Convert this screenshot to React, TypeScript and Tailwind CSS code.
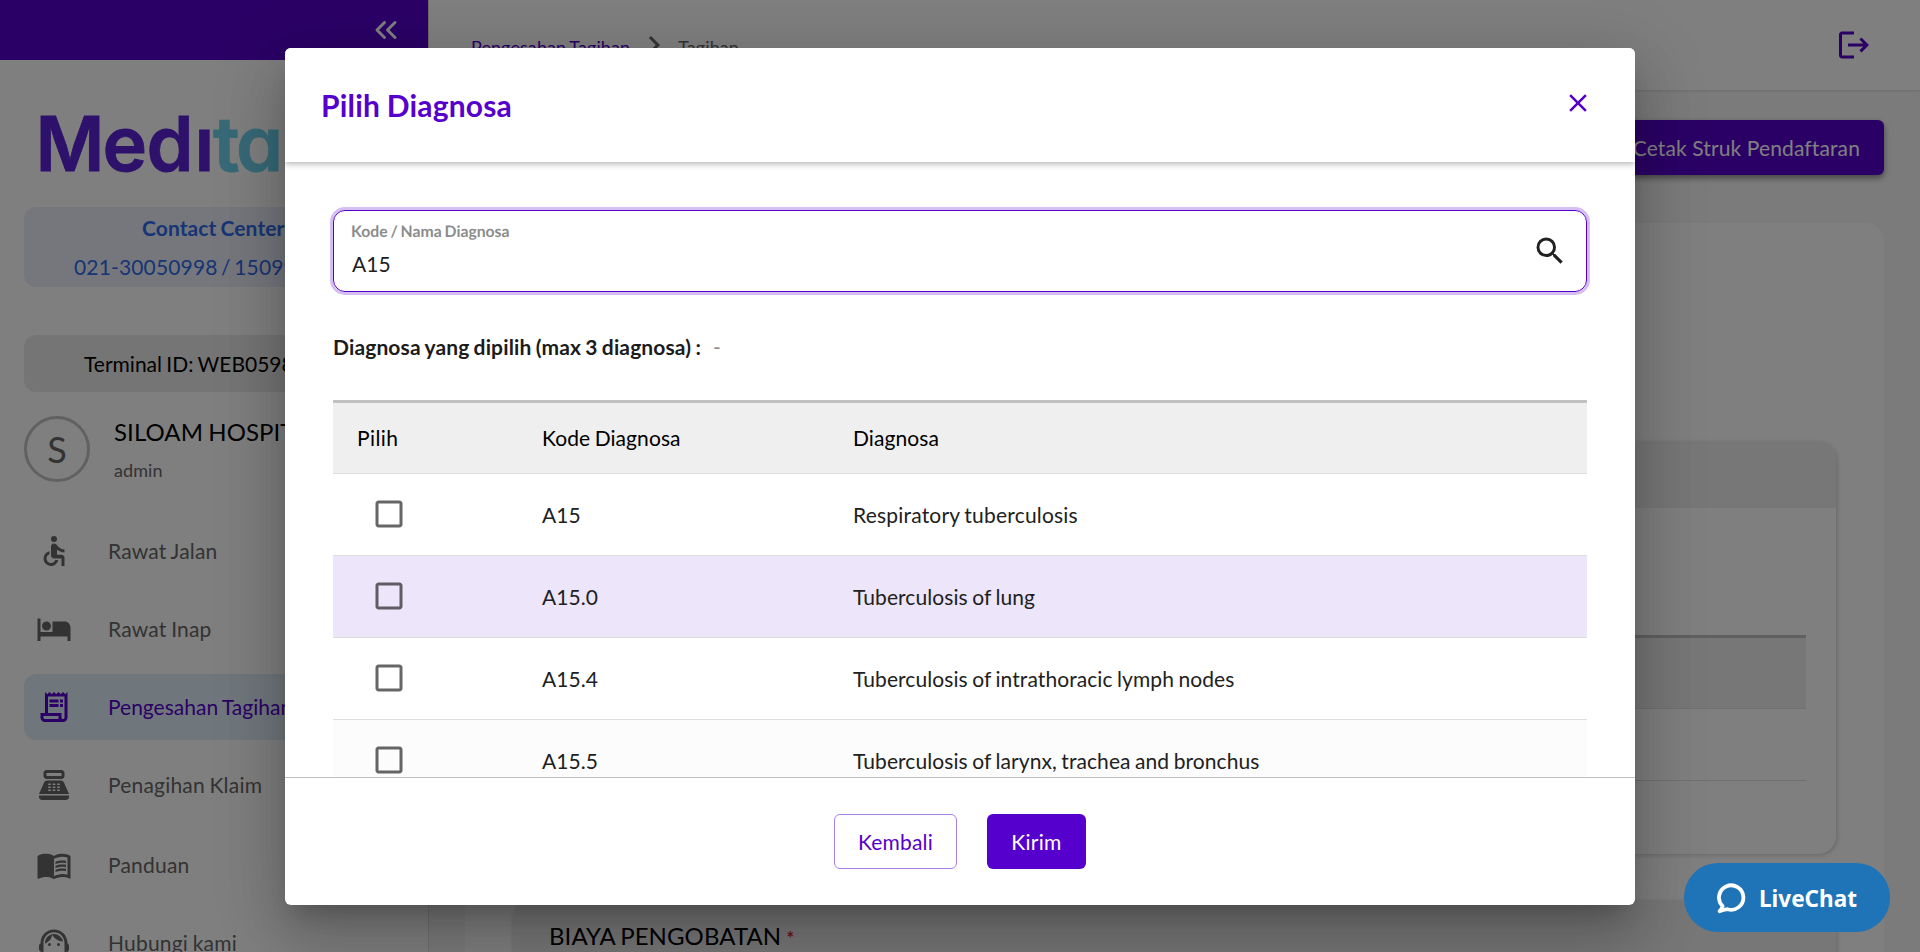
import React from "react";
import type { IconType } from "react-icons";
import {
  MdAccessible,
  MdCheckBoxOutlineBlank,
  MdChevronRight,
  MdClose,
  MdHotel,
  MdLogout,
  MdMenuBook,
  MdOutlineReceiptLong,
  MdPointOfSale,
  MdSearch,
  MdSupportAgent,
} from "react-icons/md";
import { ChevronsLeft } from "lucide-react";
import clsx from "clsx";

type NavItem = { label: string; icon: IconType; active?: boolean; spaced?: boolean };

const navItems: NavItem[] = [
  { label: "Rawat Jalan", icon: MdAccessible },
  { label: "Rawat Inap", icon: MdHotel },
  { label: "Pengesahan Tagihan", icon: MdOutlineReceiptLong, active: true },
  { label: "Penagihan Klaim", icon: MdPointOfSale },
  { label: "Panduan", icon: MdMenuBook, spaced: true },
  { label: "Hubungi kami", icon: MdSupportAgent },
];

type Diagnosis = { code: string; name: string; tone: string };

const diagnoses: Diagnosis[] = [
  { code: "A15", name: "Respiratory tuberculosis", tone: "bg-white" },
  { code: "A15.0", name: "Tuberculosis of lung", tone: "bg-[#ede5fa]" },
  { code: "A15.4", name: "Tuberculosis of intrathoracic lymph nodes", tone: "bg-white" },
  { code: "A15.5", name: "Tuberculosis of larynx, trachea and bronchus", tone: "bg-[#fcfcfc]" },
];

function Logo() {
  return (
    <svg className="block h-[147px] w-[428px] shrink-0" viewBox="0 60 428 147">
      <g
        className="font-['Inter',sans-serif] tracking-normal [font-feature-settings:'cv11']"
        fontSize="75.5"
        fontWeight="600"
      >
        <text y="171" x="35.5" fill="#5b22d6" stroke="#5b22d6" strokeWidth="0.8" textLength="69" lengthAdjust="spacingAndGlyphs">
          M
        </text>
        <text y="171" x="102.5 146.5 194.5" fill="#5b22d6" stroke="#5b22d6" strokeWidth="0.8">
          edı
        </text>
        <text y="171" x="213 236" fill="#6fd3ef" stroke="#6fd3ef" strokeWidth="0.8">
          ta
        </text>
      </g>
    </svg>
  );
}

function Sidebar() {
  return (
    <aside className="flex w-[429px] shrink-0 flex-col border-r border-[#e0e0e0] bg-white">
      <div className="flex h-[60px] shrink-0 items-center justify-end bg-[#5600cd] pr-6 text-white">
        <ChevronsLeft size={36} strokeWidth={2} />
      </div>
      <Logo />
      <div className="mx-6 flex h-20 shrink-0 flex-col whitespace-nowrap rounded-xl bg-[#ebeffb] pt-px leading-[39px] text-[#2f6ae8]">
        <span className="pl-[118px] font-bold">Contact Center</span>
        <span className="pl-[50px] tracking-[0.15px] [word-spacing:-2px]">021-30050998 / 1509977</span>
      </div>
      <div className="mx-6 mt-12 flex h-[57px] shrink-0 items-center whitespace-nowrap rounded-xl bg-[#ebebeb] pl-[60px] tracking-normal">
        Terminal ID: WEB059881
      </div>
      <div className="mx-6 mt-6 flex h-[66px] shrink-0 items-center">
        <div className="flex size-[66px] items-center justify-center rounded-full border-[3px] border-[#c2c2c2] text-[36px] text-[#666]">
          S
        </div>
        <div className="ml-6 flex flex-col whitespace-nowrap">
          <span className="text-2xl leading-9">SILOAM HOSPITALS</span>
          <span className="mt-[7px] text-lg leading-[27px] text-[#666]">admin</span>
        </div>
      </div>
      <nav className="mx-6 mt-9 flex flex-col gap-3">
        {navItems.map(({ label, icon: Icon, active, spaced }) => (
          <div
            key={label}
            className={clsx(
              "flex h-[66px] shrink-0 items-center whitespace-nowrap rounded-xl pl-3",
              active ? "bg-[#e1eff9] text-[#5600cd]" : "text-[#666]",
              spaced && "mt-[2px]",
            )}
          >
            <Icon size={36} />
            <span className={clsx("ml-9", active ? "tracking-normal" : "tracking-[0.2px]")}>{label}</span>
          </div>
        ))}
      </nav>
    </aside>
  );
}

function Page() {
  return (
    <main className="flex min-w-0 flex-1 flex-col bg-[#f7f7f7]">
      <header className="flex h-[90px] shrink-0 items-start justify-between bg-white pl-[42px] pr-12 shadow-[0_1px_3px_rgba(0,0,0,0.12)]">
        <div className="flex items-start pt-[27px] text-lg leading-9">
          <span className="pt-[2px] text-[#5600cd]">Pengesahan Tagihan</span>
          <MdChevronRight size={36} className="ml-[6px] text-[#666]" />
          <span className="ml-[6px] pt-[2px] text-[#666]">Tagihan</span>
        </div>
        <MdLogout size={36} className="mt-[27px] text-[#5600cd]" />
      </header>
      <div className="flex justify-end pr-9 pt-[30px]">
        <button className="h-[55px] w-[300px] rounded-md bg-[#5600cd] pr-6 text-right tracking-[0.12px] text-white shadow-[0_3px_6px_rgba(0,0,0,0.45)]">
          Cetak Struk Pendaftaran
        </button>
      </div>
      <section className="ml-9 mr-9 mt-12 flex h-[900px] shrink-0 flex-col rounded-[18px] bg-white px-12 pt-[219px]">
        <div className="h-[412px] shrink-0 overflow-visible rounded-[18px] shadow-[1px_1px_5px_rgba(0,0,0,0.2)]">
          <div className="h-[66px] rounded-t-[18px] bg-[#efefef]" />
          <div className="mx-[30px] mt-[127px] h-[74px] border-b border-t-[3px] border-b-[#dedede] border-t-[#c0c0c0] bg-[#efefef]" />
          <div className="mx-[30px] h-[72px] border-b border-[#dedede]" />
        </div>
        <div className="mt-[47px] h-[200px] shrink-0 rounded-[18px] bg-[#efefef] pl-9 pt-[17px] text-2xl leading-9 shadow-[1px_1px_5px_rgba(0,0,0,0.2)]">
          BIAYA PENGOBATAN <span className="text-lg font-bold text-[#d32f2f]">*</span>
        </div>
      </section>
    </main>
  );
}

function DiagnosisDialog() {
  return (
    <div
      role="dialog"
      className="flex h-[857px] w-[1350px] flex-col overflow-hidden rounded-md bg-white shadow-[0_16px_22px_-10px_rgba(0,0,0,0.2),0_36px_57px_4px_rgba(0,0,0,0.14),0_13px_69px_12px_rgba(0,0,0,0.12)]"
    >
      <div className="z-10 flex h-[114px] shrink-0 items-center justify-between bg-white pl-9 pr-[42px] shadow-[0_2px_6px_rgba(0,0,0,0.3)]">
        <h2 className="text-[30px] font-bold tracking-[0.2px] text-[#5600cd]">Pilih Diagnosa</h2>
        <MdClose size={30} className="-mt-1 text-[#5600cd]" />
      </div>
      <div className="flex min-h-0 flex-1 flex-col overflow-hidden px-12 pt-12">
        <div className="flex h-[82px] shrink-0 items-center justify-between rounded-xl border border-[#5600cd] px-[18px] shadow-[0_0_0_3px_rgba(86,0,205,0.25)]">
          <div className="-mt-[3px] flex flex-col">
            <span className="-ml-px text-[15.75px] font-bold leading-6 tracking-normal text-[#8c8c8c] [text-rendering:geometricPrecision] [word-spacing:-1px]">
              Kode / Nama Diagnosa
            </span>
            <span className="mt-[5px] leading-[30px] text-[#212121]">A15</span>
          </div>
          <MdSearch size={36} className="text-[#212121]" />
        </div>
        <div className="mt-10 flex h-[30px] shrink-0 items-center whitespace-pre text-[#1c1c1c]">
          <span className="font-bold tracking-[0.13px]">Diagnosa yang dipilih (max 3 diagnosa) :</span>
          <span className="ml-3 text-[#8c8c8c]">-</span>
        </div>
        <div className="mt-[38px] grid h-[74px] shrink-0 grid-cols-[185px_311px_1fr] items-center border-b border-t-[3px] border-b-[#dedede] border-t-[#c0c0c0] bg-[#efefef] pl-6 text-black">
          <span className="tracking-[0.4px]">Pilih</span>
          <span>Kode Diagnosa</span>
          <span>Diagnosa</span>
        </div>
        {diagnoses.map((d, i) => (
          <div
            key={d.code}
            className={clsx(
              "grid h-[82px] shrink-0 grid-cols-[185px_311px_1fr] items-center border-b border-[#dedede] pl-6 text-[#212121]",
              d.tone,
            )}
          >
            <MdCheckBoxOutlineBlank size={36} className="-mt-[2px] ml-[14px] text-black/60" />
            <span>{d.code}</span>
            <span className={clsx(i === 0 && "tracking-[0.2px]")}>{d.name}</span>
          </div>
        ))}
      </div>
      <div className="flex h-[128px] shrink-0 items-center justify-center gap-[30px] border-t border-[#c0c0c0]">
        <button className="h-[55px] w-[123px] rounded-md border border-[#aa80e6] tracking-[0.2px] text-[#5600cd]">
          Kembali
        </button>
        <button className="h-[55px] w-[99px] rounded-md bg-[#5600cd] tracking-[0.3px] text-white">Kirim</button>
      </div>
    </div>
  );
}

function LiveChat() {
  return (
    <button className="absolute bottom-5 right-[30px] flex h-[69px] w-[206px] items-center rounded-[34px] bg-[#1f73b7] pl-[33px] pt-[2px] text-white">
      <svg className="h-[31px] w-[30px]" viewBox="0 0 30 31" fill="none" stroke="currentColor" strokeWidth="3.8" strokeLinejoin="round">
        <path d="M5.6 23.2 A12.2 12.2 0 1 1 10.6 26.2 Q6 27 2.6 28.2 Q4.8 26.2 5.6 23.2 Z" />
      </svg>
      <span className="ml-3 font-['Noto_Sans',sans-serif] text-[22.5px] font-bold tracking-normal">LiveChat</span>
    </button>
  );
}

export default function App() {
  return (
    <div className="relative h-[952px] w-[1920px] overflow-hidden font-['Lato',sans-serif] text-[21px] leading-[30px] tracking-[0.08px] text-black [word-spacing:-1px]">
      <div className="flex h-full overflow-hidden">
        <Sidebar />
        <Page />
      </div>
      <div className="absolute inset-0 flex items-start justify-center bg-black/50 pt-12">
        <DiagnosisDialog />
      </div>
      <LiveChat />
    </div>
  );
}
